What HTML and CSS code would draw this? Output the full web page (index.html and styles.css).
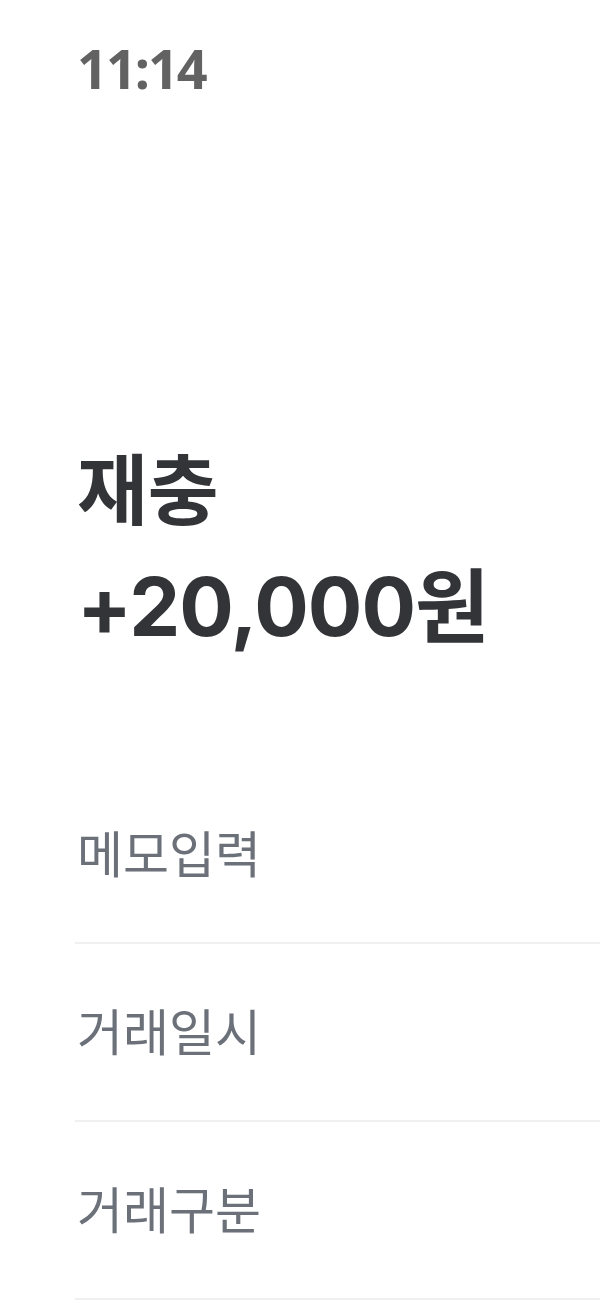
FILE: index.html
```html
<!DOCTYPE html>
<html lang="ko">
<head>
<meta charset="utf-8">
<link rel="stylesheet" href="styles.css">
</head>
<body>
<div class="screen">
  <div class="status">
    <span class="time">11:14</span>
  </div>
  <div class="summary">
    <h1 class="title">재충</h1>
    <div class="amount">+20,000원</div>
  </div>
  <ul class="details">
    <li class="row"><span class="label">메모입력</span></li>
    <li class="row"><span class="label">거래일시</span></li>
    <li class="row"><span class="label">거래구분</span></li>
  </ul>
</div>
</body>
</html>
```
FILE: styles.css
```css
html, body {
  margin: 0;
  padding: 0;
  background: #ffffff;
}
.screen {
  width: 600px;
  height: 1300px;
  overflow: hidden;
  font-family: "Inter", "Noto Sans CJK KR", sans-serif;
}
.status {
  padding: 38px 0 0 77px;
  height: 60px;
}
.time {
  font-family: "Noto Sans", sans-serif;
  font-weight: 700;
  font-size: 54px;
  line-height: 60px;
  letter-spacing: -2px;
  color: #626262;
}
.summary {
  padding: 338px 0 0 77px;
}
.title {
  margin: 0 0 16px;
  font-family: "Noto Sans CJK KR", sans-serif;
  font-weight: 700;
  font-size: 77px;
  line-height: 100px;
  color: #333438;
}
.amount {
  font-family: "Inter", "Noto Sans CJK KR", sans-serif;
  font-weight: 700;
  font-size: 81px;
  line-height: 110px;
  color: #333438;
  letter-spacing: -1px;
}
.details {
  list-style: none;
  margin: 104px 0 0 75px;
  padding: 0;
}
.row {
  height: 178px;
  border-bottom: 2px solid #eef0f2;
  display: flex;
  align-items: center;
  padding: 0 0 6px 2px;
  box-sizing: border-box;
}
.label {
  font-family: "Noto Sans CJK KR", sans-serif;
  font-weight: 400;
  font-size: 50px;
  color: #6b7079;
}
```
